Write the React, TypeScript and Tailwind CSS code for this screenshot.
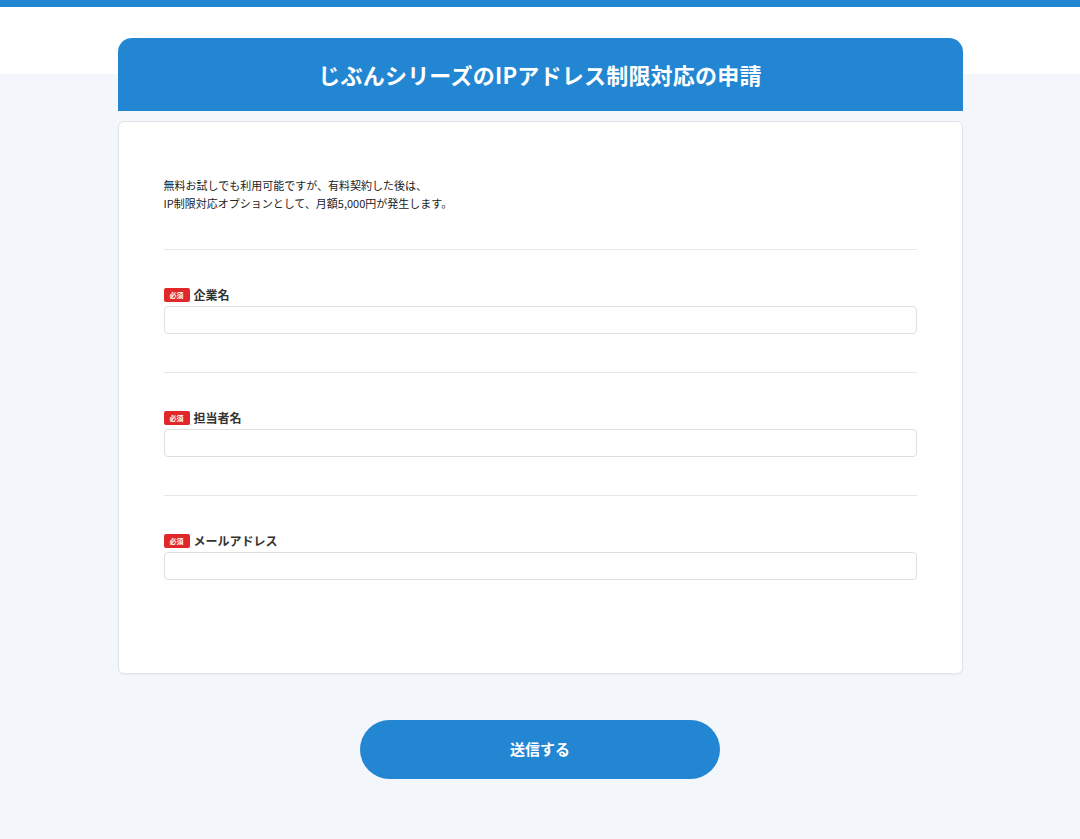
import React from 'react';

const fields = ['企業名', '担当者名', 'メールアドレス'];

const Required = () => (
    <span className="inline-flex items-center justify-center w-[26px] h-[14px] rounded-[2px] bg-[#e0282a] text-white text-[7px] font-bold leading-none">
        必須
    </span>
);

const App = () => {
    return (
        <div
            className="min-h-screen bg-[linear-gradient(to_bottom,#ffffff_67px,#f3f6fb_67px)] text-[#333] border-t-[7px] border-[#2386d2]"
            style={{ fontFamily: '"Noto Sans CJK JP", "Noto Sans", sans-serif' }}
        >
            <div className="w-[845px] mx-auto pt-[31px] pb-[61px]">
                {/* Title */}
                <div className="h-[73px] bg-[#2386d2] rounded-t-[14px] flex items-center justify-center">
                    <h1 className="text-white text-[22px] font-bold tracking-[0.01em]">
                        じぶんシリーズのIPアドレス制限対応の申請
                    </h1>
                </div>

                {/* Form card */}
                <div className="mt-[10px] bg-white border border-[#e2e4e8] rounded-[6px] shadow-[0_1px_2px_rgba(0,0,0,0.05)] px-[45px] pt-[54px] pb-[93px]">
                    <div className="pb-[37px] border-b border-[#e6e8ec]">
                        <p className="text-[11px] leading-[18px] text-[#222]">
                            無料お試しでも利用可能ですが、有料契約した後は、
                            <br />
                            IP制限対応オプションとして、月額5,000円が発生します。
                        </p>
                    </div>

                    {fields.map((label, i) => (
                        <div
                            key={label}
                            className={`pt-[36px] ${i < fields.length - 1 ? 'pb-[38px] border-b border-[#e6e8ec]' : ''}`}
                        >
                            <label className="flex items-center gap-[4px] h-[18px] text-[12px] font-bold">
                                <Required />
                                {label}
                            </label>
                            <input
                                type="text"
                                className="mt-[2px] block w-full h-[28px] border border-[#dcdfe3] rounded-[4px] bg-white px-2 text-[12px] outline-none"
                            />
                        </div>
                    ))}
                </div>

                {/* Submit */}
                <div className="mt-[46px] flex justify-center">
                    <button className="w-[360px] h-[59px] rounded-full bg-[#2386d2] text-white text-[15px] font-bold">
                        送信する
                    </button>
                </div>
            </div>
        </div>
    );
};

export default App;
